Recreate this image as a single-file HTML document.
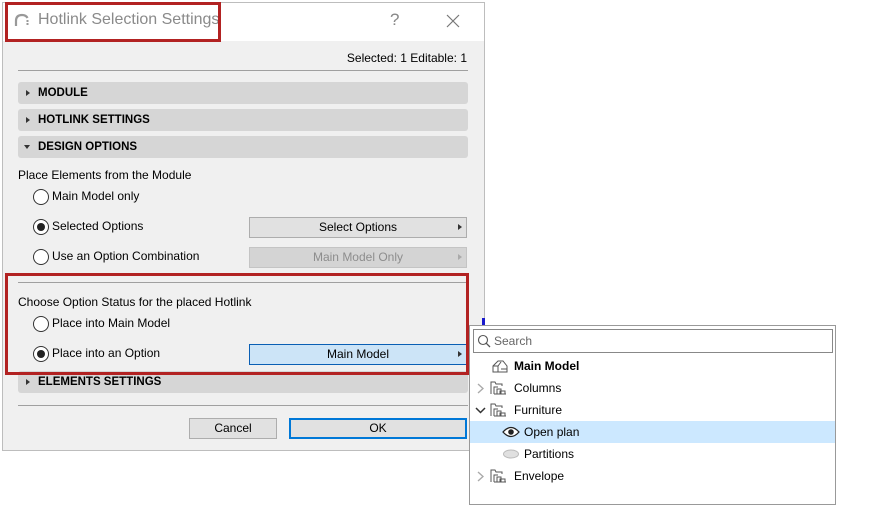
<!DOCTYPE html>
<html><head><meta charset="utf-8"><style>
*{margin:0;padding:0;box-sizing:border-box}
body{width:877px;height:495px;background:#fff;position:relative;overflow:hidden;font-family:"Segoe UI","Liberation Sans",sans-serif;font-size:12px;color:#000}
.a{position:absolute}
.dlg{left:2px;top:2px;width:483px;height:449px;border:1px solid #bdbdbd;background:#f0f0f0}
.title{left:0;top:0;width:481px;height:38px;background:#fff}
.hdr{left:18px;width:450px;height:22px;background:#d6d6d6;border-radius:3px;font-weight:bold;font-size:11.5px;line-height:22px;padding-left:20px}
.tri{position:absolute;left:8px;top:8px;width:0;height:0;border-left:4px solid #333;border-top:3.5px solid transparent;border-bottom:3.5px solid transparent}
.trid{position:absolute;left:6px;top:9px;width:0;height:0;border-top:4px solid #333;border-left:3.5px solid transparent;border-right:3.5px solid transparent}
.radio{width:16px;height:16px;border:1px solid #333;border-radius:50%;background:#fff}
.radio.on::after{content:"";position:absolute;left:3px;top:3px;width:8px;height:8px;border-radius:50%;background:#222}
.lbl{font-size:12px;line-height:16px}
.btn{height:21px;border:1px solid #adadad;background:#e1e1e1;text-align:center;line-height:19px}
.arr{position:absolute;right:4px;top:6px;width:0;height:0;border-left:4px solid #333;border-top:3.5px solid transparent;border-bottom:3.5px solid transparent}
.red{border:3px solid #b22222}
.pop{left:469px;top:325px;width:367px;height:180px;border:1px solid #999;background:#fff}
.row{position:absolute;left:0;width:365px;height:22px;line-height:22px;font-size:12px}
.fold{position:absolute;left:20px;top:3px}
</style></head><body>
<div class="a dlg">
 <div class="a title"></div>
</div>
<svg class="a" style="left:14px;top:12px" width="16" height="16" viewBox="0 0 16 16"><path d="M2 14 V9 Q2 3 8 3 Q12 3 13.5 6" fill="none" stroke="#999" stroke-width="2.2"/><rect x="12.5" y="8" width="2" height="2" fill="#999"/><rect x="12.5" y="11" width="2" height="2" fill="#999"/></svg>
<div class="a" style="left:38px;top:11px;font-size:16px;color:#8a8a8a">Hotlink Selection Settings</div>
<div class="a" style="left:390px;top:10px;font-size:17px;color:#888">?</div>
<svg class="a" style="left:446px;top:14px" width="14" height="14"><path d="M1 1L13 13M13 1L1 13" stroke="#777" stroke-width="1.2"/></svg>
<div class="a red" style="left:5px;top:2px;width:216px;height:40px"></div>

<div class="a" style="right:410px;top:51px;font-size:12px">Selected: 1 Editable: 1</div>
<div class="a" style="left:18px;top:70px;width:450px;height:1px;background:#a0a0a0"></div>

<div class="a hdr" style="top:82px"><span class="tri"></span>MODULE</div>
<div class="a hdr" style="top:109px"><span class="tri"></span>HOTLINK SETTINGS</div>
<div class="a hdr" style="top:136px"><span class="trid"></span>DESIGN OPTIONS</div>

<div class="a lbl" style="left:18px;top:167px">Place Elements from the Module</div>
<div class="a radio" style="left:33px;top:189px"></div><div class="a lbl" style="left:52px;top:188px">Main Model only</div>
<div class="a radio on" style="left:33px;top:219px"></div><div class="a lbl" style="left:52px;top:218px">Selected Options</div>
<div class="a btn" style="left:249px;top:217px;width:218px">Select Options<span class="arr"></span></div>
<div class="a radio" style="left:33px;top:249px"></div><div class="a lbl" style="left:52px;top:248px">Use an Option Combination</div>
<div class="a btn" style="left:249px;top:247px;width:218px;background:#d4d4d4;border-color:#c4c4c4;color:#8d8d8d">Main Model Only<span class="arr" style="border-left-color:#aaa"></span></div>

<div class="a" style="left:18px;top:282px;width:450px;height:1px;background:#a0a0a0"></div>
<div class="a lbl" style="left:18px;top:294px">Choose Option Status for the placed Hotlink</div>
<div class="a radio" style="left:33px;top:316px"></div><div class="a lbl" style="left:52px;top:315px">Place into Main Model</div>
<div class="a radio on" style="left:33px;top:346px"></div><div class="a lbl" style="left:52px;top:345px">Place into an Option</div>
<div class="a btn" style="left:249px;top:344px;width:218px;background:#cce4f7;border-color:#0a5fb4">Main Model<span class="arr"></span></div>

<div class="a hdr" style="top:371px"><span class="tri"></span>ELEMENTS SETTINGS</div>
<div class="a red" style="left:5px;top:273px;width:464px;height:102px"></div>

<div class="a" style="left:18px;top:405px;width:450px;height:1px;background:#a0a0a0"></div>
<div class="a btn" style="left:189px;top:418px;width:88px">Cancel</div>
<div class="a btn" style="left:289px;top:418px;width:178px;border:2px solid #0078d7;line-height:17px">OK</div>

<div class="a" style="left:482px;top:318px;width:3px;height:7px;background:#1a1acc"></div>

<div class="a pop">
 <div class="a" style="left:3px;top:3px;width:360px;height:24px;border:1px solid #888;background:#fff"></div>
 <svg class="a" style="left:7px;top:8px" width="14" height="14"><circle cx="6" cy="6" r="4.5" fill="none" stroke="#555" stroke-width="1.1"/><path d="M9.3 9.3L13 13" stroke="#555" stroke-width="1.3"/></svg>
 <div class="a" style="left:24px;top:8px;color:#666;font-size:12px">Search</div>
 <div class="row" style="top:29px"><svg class="a" style="left:22px;top:4px" width="16" height="14"><path d="M1 13V7L6 2H11L15 7V13Z M1 7H6L9 3 M6 7V13 M9 10H15" fill="none" stroke="#555" stroke-width="1"/></svg><b style="position:absolute;left:44px">Main Model</b></div>
 <div class="row" style="top:51px"><svg class="a" style="left:7px;top:6px" width="7" height="11"><path d="M1 1L6 5.5L1 10" fill="none" stroke="#aaa" stroke-width="1.4"/></svg><svg class="fold" width="18" height="16"><path d="M1 14V2H5L6 4H12V6 M4 14V7H8 M7 14V9H11V14 M10 14V11H15V14 M4 14H16" fill="none" stroke="#555" stroke-width="1"/></svg><span class="a" style="left:44px">Columns</span></div>
 <div class="row" style="top:73px"><svg class="a" style="left:5px;top:8px" width="11" height="7"><path d="M1 1L5.5 5.5L10 1" fill="none" stroke="#333" stroke-width="1.5"/></svg><svg class="fold" width="18" height="16"><path d="M1 14V2H5L6 4H12V6 M4 14V7H8 M7 14V9H11V14 M10 14V11H15V14 M4 14H16" fill="none" stroke="#555" stroke-width="1"/></svg><span class="a" style="left:44px">Furniture</span></div>
 <div class="row" style="top:95px;background:#cce8ff"><svg class="a" style="left:32px;top:5px" width="18" height="12"><path d="M1 6Q9 -3 17 6Q9 15 1 6Z" fill="#fff" stroke="#222" stroke-width="1.3"/><circle cx="9" cy="6" r="2.8" fill="#222"/></svg><span class="a" style="left:54px">Open plan</span></div>
 <div class="row" style="top:117px"><svg class="a" style="left:32px;top:6px" width="18" height="10"><ellipse cx="9" cy="5" rx="7.5" ry="4" fill="#e0e0e0" stroke="#bbb"/></svg><span class="a" style="left:54px">Partitions</span></div>
 <div class="row" style="top:139px"><svg class="a" style="left:7px;top:6px" width="7" height="11"><path d="M1 1L6 5.5L1 10" fill="none" stroke="#aaa" stroke-width="1.4"/></svg><svg class="fold" width="18" height="16"><path d="M1 14V2H5L6 4H12V6 M4 14V7H8 M7 14V9H11V14 M10 14V11H15V14 M4 14H16" fill="none" stroke="#555" stroke-width="1"/></svg><span class="a" style="left:44px">Envelope</span></div>
</div>
</body></html>
